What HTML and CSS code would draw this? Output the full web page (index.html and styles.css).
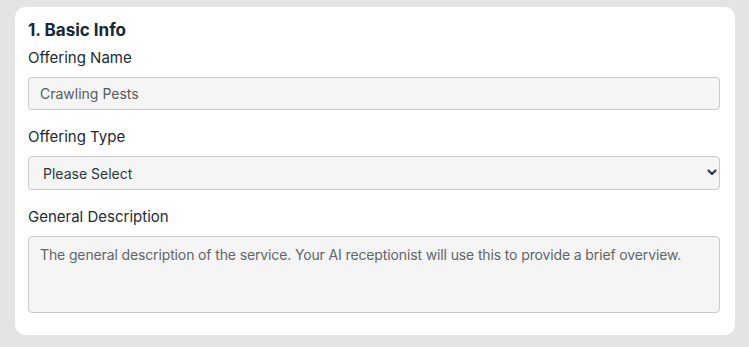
FILE: index.html
```html
<!DOCTYPE html>
<html lang="en">
<head>
  <meta charset="UTF-8">
  <title>Offering - Basic Info</title>
  <link rel="stylesheet" href="styles.css">
</head>
<body>
  <div class="card">
    <h2>1. Basic Info</h2>

    <div class="field">
      <label for="name">Offering Name</label>
      <input id="name" type="text" value="Crawling Pests">
    </div>

    <div class="field">
      <label for="type">Offering Type</label>
      <div class="select-wrap">
        <select id="type">
          <option>Please Select</option>
          <option>Service</option>
          <option>Product</option>
        </select>
        <svg class="chevron" width="10" height="7" viewBox="0 0 10 7">
          <path d="M1.5 1.5 L5 5 L8.5 1.5" fill="none" stroke="#2b3b4b" stroke-width="2.2" stroke-linecap="round" stroke-linejoin="round"/>
        </svg>
      </div>
    </div>

    <div class="field last">
      <label for="desc">General Description</label>
      <textarea id="desc" placeholder="The general description of the service. Your AI receptionist will use this to provide a brief overview."></textarea>
    </div>
  </div>
</body>
</html>
```

FILE: styles.css
```css
body {
  margin: 0;
  background: #e4e4e4;
  font-family: Inter, 'Noto Sans', sans-serif;
  padding: 7px 14px 12px 15px;
}
.card {
  background: white;
  border-radius: 10px;
  width: 692px;
  padding: 11px 15px 22px 13px;
}
h2 {
  margin: 0 0 5px;
  font-size: 17px;
  line-height: 24px;
  font-weight: 700;
  color: #13283b;
}
.field {
  margin-bottom: 16px;
}
.field.last {
  margin-bottom: 0;
}
label {
  display: block;
  font-size: 15px;
  line-height: 22px;
  color: #1d2935;
  margin-bottom: 8px;
}
input, select, textarea {
  display: block;
  box-sizing: border-box;
  width: 100%;
  margin: 0;
  background: #f5f5f5;
  border: 1px solid #c9c9c9;
  border-radius: 4px;
  font-family: Inter, 'Noto Sans', sans-serif;
  font-size: 14px;
  outline: none;
}
input {
  height: 33px;
  padding: 0 11px;
  color: #555b61;
}
.select-wrap {
  position: relative;
}
select {
  appearance: none;
  -webkit-appearance: none;
  height: 34px;
  padding: 0 14px;
  color: #2e353b;
}
.chevron {
  position: absolute;
  right: 3px;
  top: 13px;
}
textarea {
  height: 77px;
  padding: 8px 11px;
  line-height: 20px;
  letter-spacing: -0.13px;
  resize: none;
}
textarea::placeholder {
  color: #5f656b;
  opacity: 1;
}
```
